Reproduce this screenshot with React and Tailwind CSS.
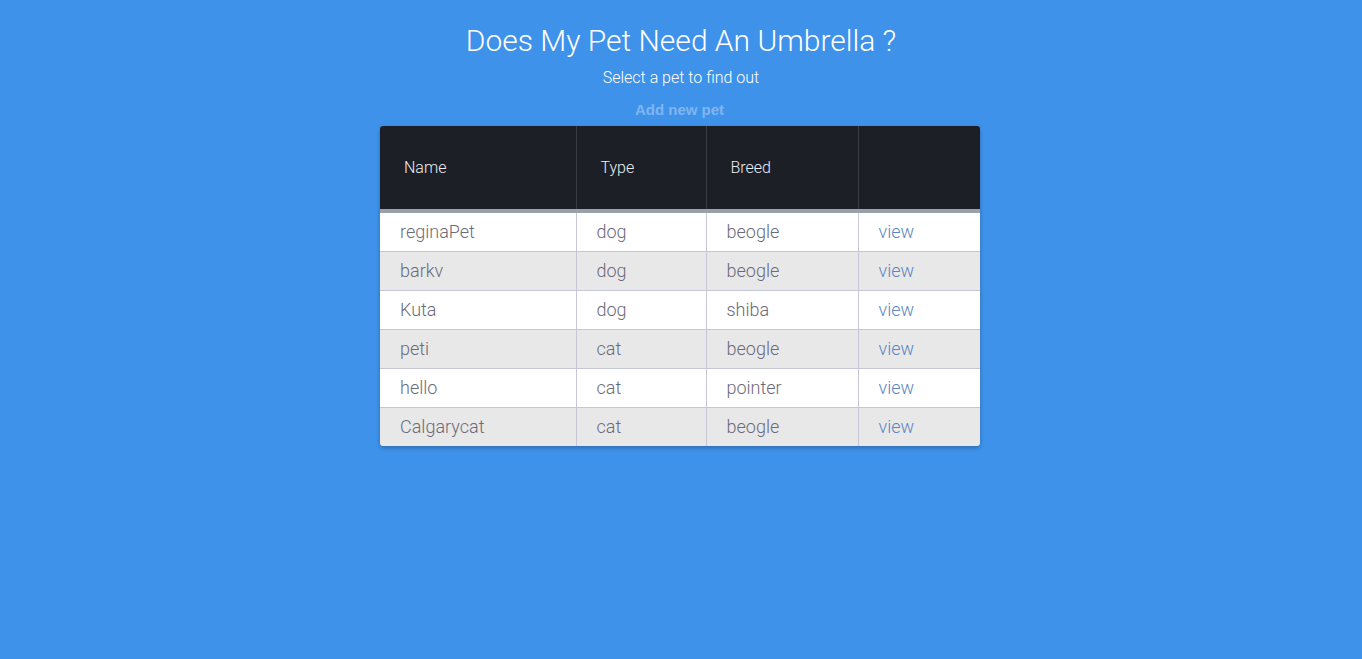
import React from "react";

const pets = [
  { name: "reginaPet", type: "dog", breed: "beogle" },
  { name: "barkv", type: "dog", breed: "beogle" },
  { name: "Kuta", type: "dog", breed: "shiba" },
  { name: "peti", type: "cat", breed: "beogle" },
  { name: "hello", type: "cat", breed: "pointer" },
  { name: "Calgarycat", type: "cat", breed: "beogle" },
];

export default function App() {
  return (
    <div className="min-h-screen bg-[#3e92ea] font-['Roboto',sans-serif] flex flex-col items-center pt-[21px]">
      <h1 className="text-[30px] leading-[40px] font-light text-white">Does My Pet Need An Umbrella ?</h1>
      <p className="mt-[5px] text-[16px] leading-[24px] font-light text-white">Select a pet to find out</p>
      <a className="mt-[8px] ml-[-3px] text-[15px] leading-[24px] font-bold text-[#80b6f0] font-['Liberation_Sans',sans-serif] cursor-pointer">
        Add new pet
      </a>
      <div className="mt-[4px] mr-[2px] w-[600px] rounded-[3px] overflow-hidden shadow-[0_2px_4px_rgba(0,0,0,0.25)]">
        <table className="w-full border-collapse text-left">
          <thead>
            <tr className="bg-[#1c1f26] h-[85px] border-b-4 border-[#9aa1a9]">
              <th className="w-[196px] pl-[24px] font-light text-[16px] text-[#eceef2]">Name</th>
              <th className="w-[130px] pl-[24px] font-light text-[16px] text-[#eceef2] border-l border-[#383b44]">Type</th>
              <th className="w-[152px] pl-[24px] font-light text-[16px] text-[#eceef2] border-l border-[#383b44]">Breed</th>
              <th className="pl-[24px] border-l border-[#383b44]"></th>
            </tr>
          </thead>
          <tbody>
            {pets.map((p, i) => (
              <tr
                key={p.name}
                className={`${i === 0 ? "h-[40px] bg-white" : i % 2 === 0 ? "h-[39px] bg-white" : "h-[39px] bg-[#e8e8e8]"} ${i > 0 ? "border-t border-[#c6c6d6]" : ""}`}
              >
                <td className="pl-[20px] text-[18px] font-light text-[#6b6a78]">{p.name}</td>
                <td className="pl-[20px] text-[18px] font-light text-[#6b6a78] border-l border-[#c6c6d6]">{p.type}</td>
                <td className="pl-[20px] text-[18px] font-light text-[#6b6a78] border-l border-[#c6c6d6]">{p.breed}</td>
                <td className="pl-[20px] text-[18px] font-light text-[#5b86c4] border-l border-[#c6c6d6] cursor-pointer">view</td>
              </tr>
            ))}
          </tbody>
        </table>
      </div>
    </div>
  );
}
